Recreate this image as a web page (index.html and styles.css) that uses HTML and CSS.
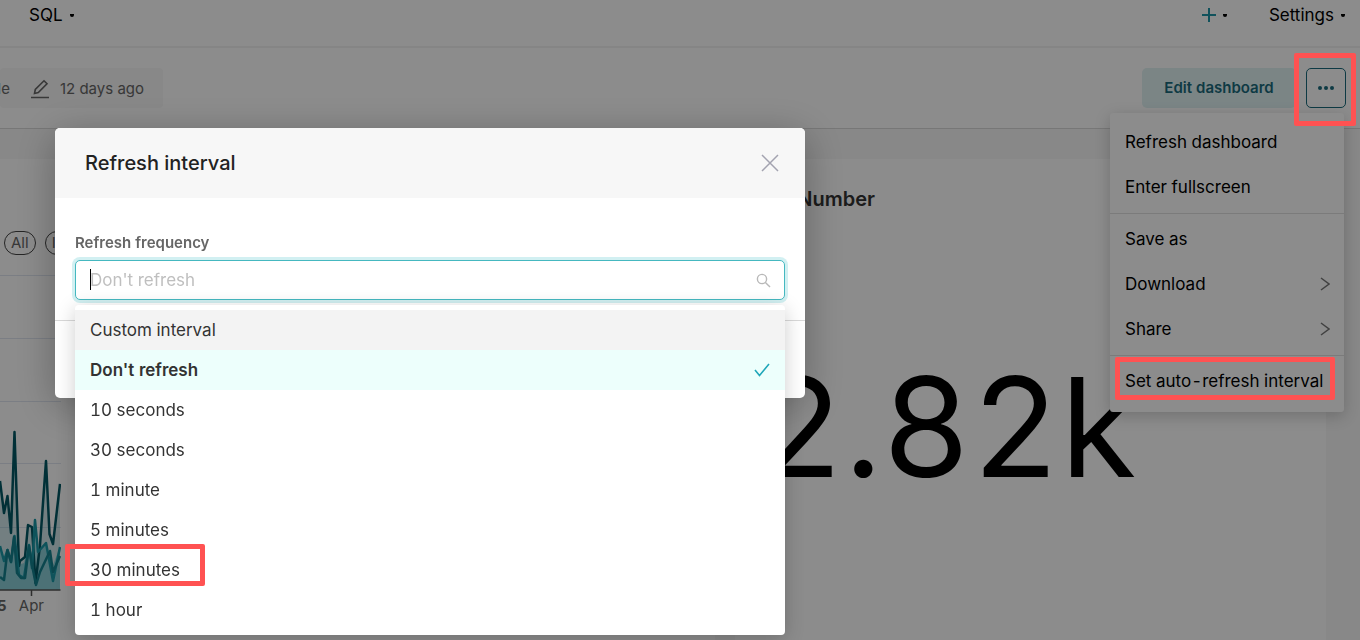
FILE: index.html
```
<!DOCTYPE html>
<html lang="en">
<head>
<meta charset="utf-8">
<meta name="viewport" content="width=device-width, initial-scale=1">
<title>Dashboard</title>
<link rel="stylesheet" href="styles.css">
</head>
<body>
<nav class="topbar">
  <a class="nav-link" href="#">SQL <span class="dot"></span></a>
  <div class="nav-right">
    <a class="nav-link plus" href="#" aria-label="New">
      <svg width="16" height="16" viewBox="0 0 16 16"><path d="M8 1v14M1 8h14" stroke="#1f96a8" stroke-width="2"/></svg>
      <span class="dot"></span>
    </a>
    <a class="nav-link" href="#">Settings <span class="dot"></span></a>
  </div>
</nav>

<header class="dash-header">
  <div class="meta">
    <span>le</span>
    <svg width="20" height="20" viewBox="0 0 20 20" fill="none" stroke="#666" stroke-width="2"><path d="M1 18.500h18" stroke-width="1.500"/><path d="M4.500 14.500l.8-4 8.700-8.700 3 3-8.700 8.700z" stroke-width="1.600"/></svg>
    <span>12 days ago</span>
  </div>
  <div class="actions">
    <button class="edit-btn">Edit dashboard</button>
    <button class="more-btn" aria-label="More options"><i></i><i></i><i></i></button>
    <ul class="menu">
      <li><a href="#">Refresh dashboard</a></li>
      <li><a href="#">Enter fullscreen</a></li>
      <li class="divider"></li>
      <li><a href="#">Save as</a></li>
      <li><a href="#">Download <svg width="10" height="14" viewBox="0 0 10 14"><path d="M1 1l8 6-8 6" fill="none" stroke="#777" stroke-width="1.500"/></svg></a></li>
      <li><a href="#">Share <svg width="10" height="14" viewBox="0 0 10 14"><path d="M1 1l8 6-8 6" fill="none" stroke="#777" stroke-width="1.500"/></svg></a></li>
      <li class="divider"></li>
      <li><a href="#">Set auto-refresh interval</a></li>
    </ul>
  </div>
</header>

<main class="grid">
  <section class="card chart-card">
    <div class="legend"><button>All</button><button>Inv</button></div>
    <svg class="chart" width="61" height="321" viewBox="0 0 61 321">
      <g stroke="#e0e6f1"><path d="M0 .5h61M0 63.500h61M0 126.500h61M0 188.500h61M0 252.500h61"/></g>
      <path d="M0 206L4 238 7.500 221 11 258 14.500 157 19 291 25 282 28 250 32 252 35.500 308 40 270 46 186 49.500 259 53 269 60 209V315H0z" fill="#1f8a99" fill-opacity=".2"/>
      <path d="M0 271L4 286 7.500 275 11 287 14.500 261 19 290 24 288 29 270 32 280 35 245 38 277 46 268 49 280 53 290 60 272V315H0z" fill="#1fa8b8" fill-opacity=".4"/>
      <g fill="none" stroke-width="2.500" stroke-linejoin="round">
        <path d="M0 206L4 238 7.500 221 11 258 14.500 157 19 291 20 286 25 282 28 250 32 252 35.500 308 40 270 46 186 49.500 259 53 269 60 209" stroke="#035864"/>
        <path d="M0 271L4 286 7.500 275 11 287 14.500 261 19 300 24 303 29 270 32 293 35 245 38 277 46 268 49 284 53 306 60 272" stroke="#1a98a6"/>
        <path d="M0 302L4 305 7.500 275 11 287 14 262 17 298 21 303 25 303 29 271 32 290 36 310 40 297 50 276 53 297 60 281" stroke="#15818f"/>
      </g>
      <path d="M0 315h60.500M31.500 315v6" stroke="#555" stroke-width="1.500"/>
    </svg>
    <div class="axis"><b>5</b><span>Apr</span></div>
  </section>
  <section class="card number-card">
    <h2>Big Number</h2>
    <p class="big">2.82k</p>
  </section>
</main>

<div class="mask">
  <div class="modal" role="dialog" aria-labelledby="modal-title">
    <div class="modal-head">
      <h1 id="modal-title">Refresh interval</h1>
      <button class="close" aria-label="Close"><svg width="18" height="18" viewBox="0 0 18 18"><path d="M1 1l16 16M17 1L1 17" stroke="#a3a3b0" stroke-width="1.500"/></svg></button>
    </div>
    <div class="modal-body">
      <label for="freq">Refresh frequency</label>
      <div class="select">
        <input type="text" id="freq" role="combobox" aria-expanded="true" aria-controls="freq-list" placeholder="Don't refresh">
        <span class="caret"></span>
        <svg class="search" width="15" height="15" viewBox="0 0 15 15" fill="none" stroke="#b8b8b8" stroke-width="1.400"><circle cx="6" cy="6" r="4.600"/><path d="M9.400 9.400l4.600 4.600"/></svg>
        <ul class="options" id="freq-list" role="listbox">
          <li role="option" class="hover">Custom interval</li>
          <li role="option" class="selected" aria-selected="true">Don't refresh
            <svg width="16" height="14" viewBox="0 0 16 14"><path d="M1 7l4.500 5.500L15 1" fill="none" stroke="#20a7b9" stroke-width="1.600"/></svg></li>
          <li role="option">10 seconds</li>
          <li role="option">30 seconds</li>
          <li role="option">1 minute</li>
          <li role="option">5 minutes</li>
          <li role="option">30 minutes</li>
          <li role="option">1 hour</li>
        </ul>
      </div>
    </div>
    <div class="modal-foot"></div>
  </div>
</div>

<!-- highlights for the tutorial steps -->
<div class="mark mark-more"></div>
<div class="mark mark-auto"></div>
<div class="mark mark-option"></div>
</body>
</html>
```
FILE: styles.css
```
* {
  box-sizing: border-box;
}

body {
  margin: 0;
  background: #f7f7f7;
  color: #000;
  font-family: Inter, "Liberation Sans", sans-serif;
  font-feature-settings: "tnum";
  font-size: 17px;
  line-height: 24px;
  height: 100vh;
  overflow: hidden;
  display: flex;
  flex-direction: column;
}

ul {
  list-style: none;
  margin: 0;
  padding: 0;
}

a {
  color: inherit;
  text-decoration: none;
}

button, input {
  font: inherit;
}

button {
  padding: 0;
  cursor: pointer;
}

.topbar {
  display: flex;
  justify-content: space-between;
  background: #fff;
  height: 48px;
  padding: 3px 15px 0 29px;
  border-bottom: 2px solid #f3f3f3;
}

.nav-link {
  display: flex;
  align-items: center;
  gap: 7px;
  height: 24px;
}

.nav-right {
  display: flex;
  gap: 42px;
}

.plus {
  gap: 6px;
}

.dot {
  width: 4px;
  height: 3px;
  border-radius: 0 0 2px 2px;
  background: #000;
}

.dash-header {
  display: flex;
  justify-content: space-between;
  align-items: center;
  background: #fff;
  height: 81px;
  padding-right: 14px;
  border-bottom: 1px solid #d9d9d9;
}

.meta {
  display: flex;
  align-items: center;
  justify-content: flex-end;
  gap: 10px;
  width: 163px;
  height: 40px;
  padding: 1px 19px 0 0;
  border-radius: 4px;
  background: #f7f7f7;
  color: #666;
  font-size: 15px;
  font-feature-settings: normal;
  white-space: nowrap;
}

.meta svg {
  flex: none;
  margin-left: 10px;
}

.actions {
  position: relative;
  display: flex;
  gap: 10px;
}

.edit-btn {
  width: 154px;
  height: 40px;
  border: 0;
  border-radius: 5px;
  background: #e0f2f3;
  color: #1a6b7c;
  font-size: 15px;
  font-weight: 600;
}

.more-btn {
  display: flex;
  align-items: center;
  justify-content: center;
  gap: 2px;
  width: 40px;
  height: 40px;
  border: 1px solid #1a6b7c;
  border-radius: 5px;
  background: #fff;
}

.more-btn i {
  width: 4px;
  height: 4px;
  border-radius: 50%;
  background: #1a6b7c;
}

.menu {
  position: absolute;
  top: 45px;
  right: 2px;
  width: 234px;
  padding: 7px 0 8px;
  background: #fff;
  border-radius: 3px;
  box-shadow: 0 4px 16px rgba(0, 0, 0, .2);
  z-index: 1;
}

.menu a {
  display: flex;
  justify-content: space-between;
  align-items: center;
  height: 45px;
  padding: 0 14px 2px 15px;
  white-space: nowrap;
}

.menu .divider {
  height: 1px;
  margin: 3px 0;
  background: #e0e0e0;
}

.grid {
  flex: 1;
  display: flex;
  gap: 20px;
  padding: 30px 34px 0 0;
}

.card {
  background: #fff;
}

.chart-card {
  flex: 0 0 715px;
  padding-top: 72px;
}

.legend {
  display: flex;
  gap: 9px;
  padding-left: 4px;
  margin-bottom: 20px;
}

.legend button {
  height: 24px;
  padding: 0 6px;
  border: 1px solid #444;
  border-radius: 12px;
  background: none;
  color: #666;
  font-size: 15px;
  line-height: 20px;
}

.chart {
  display: block;
}

.axis {
  display: flex;
  justify-content: flex-end;
  gap: 12px;
  width: 44px;
  color: #666;
  font-size: 15px;
  line-height: 20px;
}

.number-card {
  flex: 1;
}

.number-card h2 {
  margin: 28px 0 0 26px;
  font-size: 20px;
  font-weight: 600;
  line-height: 24px;
  color: #333;
}

.big {
  margin: 132px 0 0 20px;
  font-size: 138px;
  line-height: 168px;
}

.mask {
  position: fixed;
  inset: 0;
  background: rgba(0, 0, 0, .45);
  padding: 128px 55px 0;
  z-index: 2;
}

.modal {
  max-width: 750px;
  background: #fff;
  border-radius: 5px;
  box-shadow: 0 8px 40px rgba(0, 0, 0, .3);
}

.modal-head {
  display: flex;
  justify-content: space-between;
  align-items: center;
  height: 70px;
  padding: 0 26px 0 30px;
  border-radius: 5px 5px 0 0;
  background: #f7f7f7;
}

.modal-head h1 {
  margin: 0;
  font-size: 20px;
  font-weight: 500;
  color: #222;
}

.close {
  display: flex;
  border: 0;
  background: none;
}

.modal-body {
  padding: 35px 20px 20px;
}

.modal-body label {
  display: block;
  margin-bottom: 7px;
  color: #666;
  font-size: 15px;
  font-weight: 600;
  line-height: 20px;
}

.select {
  position: relative;
}

.select input {
  display: block;
  width: 100%;
  height: 40px;
  padding: 0 14px;
  border: 1px solid #45b8c0;
  border-radius: 5px;
  outline: 0;
  box-shadow: 0 0 0 3px rgba(32, 180, 190, .2);
}

.select input::placeholder {
  color: #bfbfbf;
}

.caret {
  position: absolute;
  left: 15px;
  top: 9px;
  width: 1px;
  height: 21px;
  background: #000;
}

.search {
  position: absolute;
  right: 14px;
  top: 13px;
}

.options {
  position: absolute;
  top: 45px;
  left: 0;
  right: 0;
  padding: 5px 0;
  background: #fff;
  border-radius: 4px;
  box-shadow: 0 4px 20px rgba(0, 0, 0, .2);
  color: #333;
}

.options li {
  display: flex;
  justify-content: space-between;
  align-items: center;
  height: 40px;
  padding: 0 15px;
}

.options .hover {
  background: #f3f3f3;
}

.options .selected {
  background: #edfffc;
  font-weight: 600;
}

.modal-foot {
  height: 78px;
  border-top: 1px solid #d9d9d9;
}

.mark {
  position: fixed;
  border: 5px solid #ff5252;
  border-radius: 2px;
  z-index: 3;
}

.mark-more {
  top: 53px;
  right: 4px;
  width: 62px;
  height: 73px;
}

.mark-auto {
  top: 357px;
  right: 25px;
  width: 220px;
  height: 43px;
}

.mark-option {
  top: 544px;
  left: 65px;
  width: 140px;
  height: 42px;
}
```
